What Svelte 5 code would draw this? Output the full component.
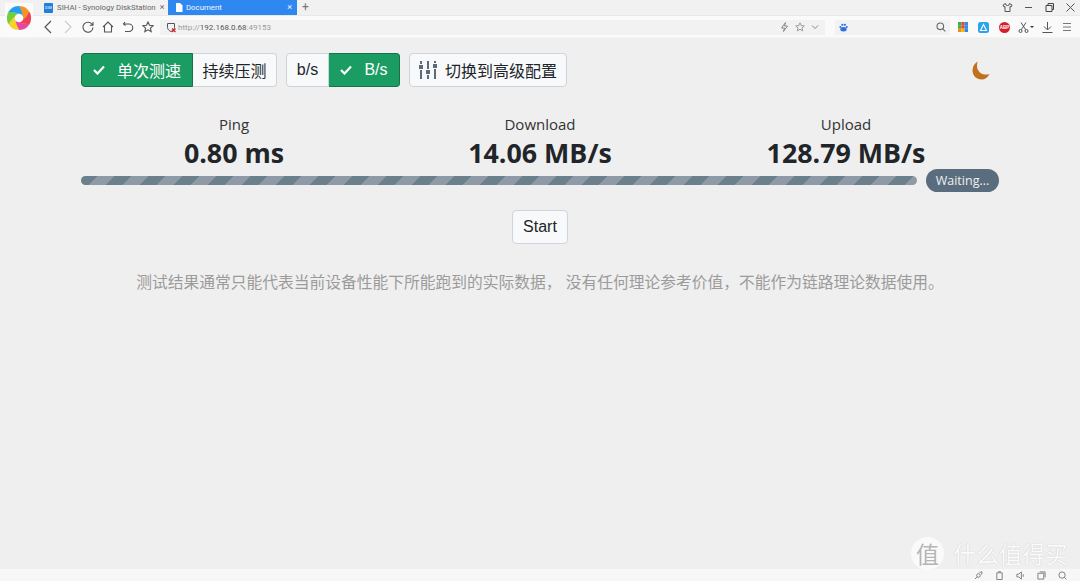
<script>
  const stats = [
    { label: 'Ping', value: '0.80 ms' },
    { label: 'Download', value: '14.06 MB/s' },
    { label: 'Upload', value: '128.79 MB/s' }
  ]

  const petals = ['#f7931e', '#ef4152', '#e8479f', '#f6d426', '#74cf3c', '#1fa0f2']
</script>

<div class="browser">
  <header class="chrome">
    <div class="logo-box">
      <svg width="24" height="24" viewBox="0 0 24 24">
        {#each petals as color, i}
          <path d="M12 0A12 12 0 0 1 22.390 6Q19.970 11.300 15.060 14.570L15.760 10.630Q15.380 4.750 12 0z" fill={color} stroke={color} stroke-width=".3" transform="rotate({i * 60} 12 12)" />
        {/each}
        <circle cx="12" cy="12" r="4.300" fill="#fff" />
      </svg>
    </div>

    <div class="tabbar">
      <div class="tab">
        <span class="dsm">DSM</span>
        <span class="tab-title">SIHAI - Synology DiskStation</span>
        <span class="tab-x">×</span>
      </div>
      <div class="tab active">
        <svg width="8" height="9" viewBox="0 0 8 9"><path d="M1 0h4l2.500 2.500V9H1z" fill="#fff" /></svg>
        <span class="tab-title">Document</span>
        <span class="tab-x">×</span>
      </div>
      <span class="new-tab">+</span>
      <div class="win-btns">
        <svg width="11" height="11" viewBox="0 0 11 11" fill="none" stroke="#555"><path d="M3.500 1.500 1 3l1 2 1-.5v5h5v-5l1 .5 1-2-2.500-1.500a2 2 0 0 1-4 0z" /></svg>
        <svg width="11" height="11" viewBox="0 0 11 11" stroke="#555"><path d="M2 5.500h7" /></svg>
        <svg width="11" height="11" viewBox="0 0 11 11" fill="none" stroke="#444"><path d="M2 3.500h6v6H2zM4 3.500v-2h5.500v6H8" /></svg>
        <svg width="11" height="11" viewBox="0 0 11 11" stroke="#555"><path d="m1.500 1.500 8 8m0-8-8 8" /></svg>
      </div>
    </div>

    <div class="toolbar">
      <div class="nav">
        <svg width="12" height="14" viewBox="0 0 12 14" fill="none" stroke="#555" stroke-width="1.200"><path d="M9 1 3 7l6 6" /></svg>
        <svg width="12" height="14" viewBox="0 0 12 14" fill="none" stroke="#ccc" stroke-width="1.200"><path d="m3 1 6 6-6 6" /></svg>
        <svg width="12" height="12" viewBox="0 0 12 12" fill="none" stroke="#555" stroke-width="1.100"><path d="M10.500 4A5 5 0 1 0 11 6.500M11 1v3.200H7.800" /></svg>
        <svg width="12" height="12" viewBox="0 0 12 12" fill="none" stroke="#555" stroke-width="1.100"><path d="M1 6 6 1l5 5M2.500 5v6h7V5" /></svg>
        <svg width="12" height="12" viewBox="0 0 12 12" fill="none" stroke="#555" stroke-width="1.100"><path d="M3 1 1.500 3 3.500 4.500M1.500 3H7a3.500 3.500 0 0 1 0 7.500H3" /></svg>
        <svg width="12" height="12" viewBox="0 0 12 12" fill="none" stroke="#555" stroke-width="1.100"><path d="m6 1 1.500 3.300 3.600.4-2.700 2.400.8 3.500L6 8.800l-3.200 1.800.8-3.500L.9 4.700l3.600-.4z" /></svg>
      </div>

      <div class="address">
        <svg width="11" height="11" viewBox="0 0 11 11"><path d="M1.500 1.500h7v4c0 2-2 3.500-3.500 4-1.500-.5-3.500-2-3.500-4z" fill="none" stroke="#555" /><path d="m6 6.500 3.500 3.500m0-3.500L6 10" stroke="#d8232a" stroke-width="1.200" /></svg>
        <span class="url"><i>http://</i>192.168.0.68<i>:49153</i></span>
        <div class="addr-right">
          <svg width="9" height="10" viewBox="0 0 9 10" fill="none" stroke="#888"><path d="M5.500.5 1.500 6h3l-1 3.500L7.500 4h-3z" /></svg>
          <svg width="10" height="10" viewBox="0 0 12 12" fill="none" stroke="#888"><path d="m6 1 1.500 3.300 3.600.4-2.700 2.400.8 3.500L6 8.800l-3.200 1.800.8-3.500L.9 4.700l3.600-.4z" /></svg>
          <svg width="8" height="10" viewBox="0 0 8 10" fill="none" stroke="#888"><path d="m1 3.500 3 3 3-3" /></svg>
        </div>
      </div>

      <div class="search">
        <svg width="9" height="9" viewBox="0 0 10 10" fill="#2f6fe4"><ellipse cx="5" cy="7" rx="3.500" ry="2.500" /><circle cx="1.500" cy="4.500" r="1.100" /><circle cx="3.700" cy="2" r="1.200" /><circle cx="6.500" cy="2" r="1.200" /><circle cx="8.600" cy="4.500" r="1.100" /></svg>
        <svg width="10" height="10" viewBox="0 0 10 10" fill="none" stroke="#666" stroke-width="1.100"><circle cx="4.300" cy="4.300" r="3.300" /><path d="m6.800 6.800 2.500 2.500" /></svg>
      </div>

      <div class="tools">
        <svg width="10" height="10" viewBox="0 0 10 10"><rect width="3.300" height="3.300" fill="#3fae49" /><rect x="3.300" width="3.400" height="3.300" fill="#e8483f" /><rect x="6.700" width="3.300" height="3.300" fill="#2d8ceb" /><rect y="3.300" width="3.300" height="3.400" fill="#3fae49" /><rect x="3.300" y="3.300" width="3.400" height="3.400" fill="#e8483f" /><rect x="6.700" y="3.300" width="3.300" height="3.400" fill="#2d8ceb" /><rect y="6.700" width="3.300" height="3.300" fill="#f28b24" /><rect x="3.300" y="6.700" width="3.400" height="3.300" fill="#f7b500" /><rect x="6.700" y="6.700" width="3.300" height="3.300" fill="#2d8ceb" /></svg>
        <svg width="11" height="11" viewBox="0 0 11 11"><rect width="11" height="11" rx="2.500" fill="#2aa3f0" /><path d="M5.500 2.500 2.500 8.500h6z" fill="none" stroke="#fff" stroke-width="1.100" /></svg>
        <svg width="11" height="11" viewBox="0 0 11 11"><circle cx="5.500" cy="5.500" r="5.500" fill="#d5202a" /><text x="5.500" y="7.300" text-anchor="middle" font-size="4.500" font-weight="700" font-family="Liberation Sans, sans-serif" fill="#fff">ABP</text></svg>
        <span class="cut">
          <svg width="11" height="11" viewBox="0 0 11 11" fill="none" stroke="#555"><circle cx="2.500" cy="9" r="1.500" /><circle cx="8.500" cy="9" r="1.500" /><path d="M3.300 7.700 8 .5M7.700 7.700 3 .5" /></svg>
          <b></b>
        </span>
        <svg class="dl" width="11" height="11" viewBox="0 0 11 11" fill="none" stroke="#555"><path d="M5.500 0v7.500M2 4.500l3.500 3.500L9 4.500M.5 10.500h10" /></svg>
        <svg width="10" height="10" viewBox="0 0 10 10" stroke="#777"><path d="M1 1.500h8M1 5h8M1 8.500h8" /></svg>
      </div>
    </div>
  </header>

  <main class="page">
    <div class="container">
      <div class="controls">
        <div class="left">
          <div class="group">
            <button class="btn on"><svg class="check" width="12" height="10" viewBox="0 0 12 10" fill="none" stroke="#fff" stroke-width="2.200"><path d="m1 5 3.500 3.500L11 1.500" /></svg>单次测速</button>
            <button class="btn">持续压测</button>
          </div>
          <div class="group">
            <button class="btn unit">b/s</button>
            <button class="btn on unit-on"><svg class="check" width="12" height="10" viewBox="0 0 12 10" fill="none" stroke="#fff" stroke-width="2.200"><path d="m1 5 3.500 3.500L11 1.500" /></svg>B/s</button>
          </div>
          <button class="btn config">
            <svg width="18" height="18" viewBox="0 0 18 18" fill="#5a6b7b"><rect x="1" y="0" width="2" height="3" /><rect x="0" y="4" width="4" height="4" /><rect x="1" y="9" width="2" height="9" /><rect x="8" y="0" width="2" height="8" /><rect x="7" y="9" width="4" height="4" /><rect x="8" y="14" width="2" height="4" /><rect x="15" y="0" width="2" height="2" /><rect x="14" y="3" width="4" height="4" /><rect x="15" y="8" width="2" height="10" /></svg>
            切换到高级配置
          </button>
        </div>
        <svg class="moon" width="18" height="19" viewBox="0 0 18 19"><path d="M5.500.5C2.500 2.500 .5 5.500.5 9.500c0 5 4 9 9 9 3.500 0 6.500-2 8-5.500-1 .4-2.200.6-3.500.6-5 0-9-3.700-9-8.600 0-1.600.2-3.100.5-4.500z" fill="#c0701f" /></svg>
      </div>

      <div class="stats">
        {#each stats as s}
          <div class="stat">
            <div class="label">{s.label}</div>
            <div class="value">{s.value}</div>
          </div>
        {/each}
      </div>

      <div class="progress-row">
        <div class="progress"></div>
        <span class="badge">Waiting...</span>
      </div>

      <div class="start-row">
        <button class="btn start">Start</button>
      </div>

      <p class="note">测试结果通常只能代表当前设备性能下所能跑到的实际数据， 没有任何理论参考价值，不能作为链路理论数据使用。</p>
    </div>

    <div class="watermark">
      <span class="wm-badge">值</span>
      <span class="wm-text">什么值得买</span>
    </div>
  </main>

  <footer class="statusbar">
    <svg width="9" height="9" viewBox="0 0 10 10" fill="none" stroke="#777"><circle cx="5" cy="5" r="2" /><path d="M1 9 3.500 6.500M6 1.500 9 1l-.5 3" /></svg>
    <svg width="9" height="9" viewBox="0 0 10 10" fill="none" stroke="#777"><path d="M2 2h6v7.500H2zM3.500 .8h3" /></svg>
    <svg width="9" height="9" viewBox="0 0 10 10" fill="none" stroke="#777"><path d="M1 3.500h2L6 1v8L3 6.500H1zM8 3.500v3" /></svg>
    <svg width="9" height="9" viewBox="0 0 10 10" fill="none" stroke="#777"><path d="M1 2.500h6.500V9H1zM3 1h6v6" /></svg>
    <svg width="9" height="9" viewBox="0 0 10 10" fill="none" stroke="#777"><circle cx="4.500" cy="4.500" r="3.500" /><path d="m7 7 2.300 2.300" /></svg>
  </footer>
</div>

<style>
  :global(body) {
    margin: 0;
    background: #efefef;
    overflow: hidden;
  }

  .browser {
    position: relative;
    display: flex;
    flex-direction: column;
    height: 581px;
    font-family: "Liberation Sans", "Noto Sans CJK SC", sans-serif;
  }

  .chrome {
    position: relative;
    flex: none;
    height: 38px;
    background: #fafafa;
    border-bottom: 1px solid #f4f4f4;
    box-sizing: border-box;
  }

  .logo-box {
    position: absolute;
    left: 5px;
    top: 3px;
    width: 28px;
    height: 30px;
    display: flex;
    align-items: center;
    justify-content: center;
    background: #fbfbfb;
  }

  .tabbar {
    display: flex;
    height: 15px;
    padding-left: 40px;
    background: #f1f1f1;
    border-bottom: 1px solid #e9e9e9;
    font-family: "Roboto", "Noto Sans", sans-serif;
  }

  .tab {
    display: flex;
    align-items: center;
    gap: 4px;
    width: 128px;
    box-sizing: border-box;
    padding: 0 5px 0 4px;
    font-size: 7.800px;
    color: #666;
  }

  .tab.active {
    width: 129px;
    padding-left: 7px;
    gap: 3px;
    background: #2f88f0;
    color: #f2f7ff;
  }

  .dsm {
    flex: none;
    width: 9px;
    height: 10px;
    background: #1f7fdc;
    color: #fff;
    font-size: 3.200px;
    line-height: 10px;
    text-align: center;
    border-radius: 1px;
  }

  .tab-title {
    flex: 1;
    white-space: nowrap;
  }

  .tab-x {
    font-size: 9px;
    line-height: 1;
  }

  .new-tab {
    margin-left: 5px;
    color: #777;
    font-size: 12px;
    line-height: 14px;
  }

  .win-btns {
    margin-left: auto;
    display: flex;
    align-items: center;
    gap: 10px;
    padding-right: 4px;
  }

  .toolbar {
    display: flex;
    align-items: center;
    height: 22px;
    padding-left: 42px;
  }

  .nav {
    display: flex;
    align-items: center;
    gap: 8px;
    width: 117px;
  }

  .address {
    display: flex;
    align-items: center;
    gap: 1px;
    width: 665px;
    height: 15px;
    box-sizing: border-box;
    margin-left: 1px;
    padding: 0 6px;
    background: #f2f2f2;
  }

  .url {
    font-family: "Roboto", "Noto Sans", sans-serif;
    font-size: 8px;
    color: #555;
  }

  .url i {
    font-style: normal;
    color: #9a9a9a;
  }

  .addr-right {
    margin-left: auto;
    display: flex;
    align-items: center;
    gap: 6px;
  }

  .search {
    display: flex;
    align-items: center;
    justify-content: space-between;
    width: 115px;
    height: 15px;
    box-sizing: border-box;
    margin-left: 10px;
    padding: 0 4px;
    background: #f2f2f2;
  }

  .tools {
    display: flex;
    align-items: center;
    gap: 10px;
    margin-left: 8px;
  }

  .cut {
    display: flex;
    align-items: center;
    gap: 1px;
    margin-left: -2px;
    margin-right: -2px;
  }

  .cut b {
    border: 2px solid transparent;
    border-top-color: #333;
    margin-top: 2px;
  }

  .dl {
    margin-right: -1px;
  }

  .page {
    position: relative;
    flex: 1;
    min-height: 0;
    background: #efefef;
  }

  .container {
    width: 918px;
    margin-left: 81px;
    padding-top: 15px;
  }

  .controls {
    display: flex;
    align-items: center;
    justify-content: space-between;
  }

  .left {
    display: flex;
    gap: 9px;
  }

  .group {
    display: flex;
  }

  .btn {
    display: inline-flex;
    align-items: center;
    justify-content: center;
    height: 34px;
    box-sizing: border-box;
    padding: 0;
    font: inherit;
    font-size: 16px;
    color: #212529;
    background: #f8f9fa;
    border: 1px solid #ced4da;
    border-radius: 4px;
    white-space: nowrap;
  }

  .btn.on {
    background: #1b9c63;
    border-color: #157347;
    color: #fff;
  }

  .group .btn:first-child {
    border-top-right-radius: 0;
    border-bottom-right-radius: 0;
  }

  .group .btn:last-child {
    border-top-left-radius: 0;
    border-bottom-left-radius: 0;
    border-left: none;
  }

  .group .btn:first-child.on {
    width: 112px;
  }

  .group .btn:last-child:not(.on) {
    width: 84px;
  }

  .btn.unit {
    width: 43px;
  }

  .btn.unit-on {
    width: 71px;
  }

  .check {
    margin-right: 12px;
  }

  .btn.config {
    width: 158px;
    gap: 8px;
  }

  .moon {
    margin-right: 9px;
  }

  .stats {
    display: grid;
    grid-template-columns: repeat(3, 1fr);
    margin-top: 26px;
    text-align: center;
    font-family: "Open Sans", "Noto Sans", sans-serif;
    color: #212529;
  }

  .label {
    font-size: 15px;
    line-height: 22px;
    color: #333;
  }

  .value {
    font-size: 26.800px;
    font-weight: 700;
    line-height: 35px;
  }

  .progress-row {
    display: flex;
    align-items: center;
    gap: 9px;
    margin-top: -1px;
  }

  .progress {
    flex: 1;
    height: 9px;
    border-radius: 5px;
    background-color: #8e9aa5;
    background-image: linear-gradient(135deg, #6c7f8d 25%, transparent 25%, transparent 50%, #6c7f8d 50%, #6c7f8d 75%, transparent 75%);
    background-size: 34px 34px;
  }

  .badge {
    width: 73px;
    height: 23px;
    border-radius: 12px;
    background: #5a6d7e;
    color: #f0f0f0;
    font-family: "Open Sans", "Noto Sans", sans-serif;
    font-size: 12.500px;
    line-height: 23px;
    text-align: center;
  }

  .start-row {
    display: flex;
    justify-content: center;
    margin-top: 18px;
  }

  .btn.start {
    width: 56px;
  }

  .note {
    margin: 28px 0 0;
    text-align: center;
    font-size: 15.750px;
    line-height: 22px;
    color: #9b9b9b;
    white-space: nowrap;
  }

  /* site watermark pasted over the screenshot corner */
  .watermark {
    position: absolute;
    right: 12px;
    bottom: -1px;
    display: flex;
    align-items: center;
    gap: 9px;
    height: 33px;
    font-family: "Noto Sans CJK SC", sans-serif;
  }

  .wm-badge {
    width: 33px;
    height: 33px;
    border-radius: 50%;
    background: #fafafa;
    color: #b5b5b5;
    font-size: 23px;
    line-height: 32px;
    text-align: center;
  }

  .wm-text {
    font-size: 23px;
    line-height: 33px;
    color: #fbfbfb;
    text-shadow: 0 0 1px #b8b8b8;
  }

  .statusbar {
    flex: none;
    display: flex;
    align-items: center;
    justify-content: flex-end;
    gap: 12px;
    height: 12px;
    padding-right: 13px;
    background: #f7f7f7;
  }
</style>
